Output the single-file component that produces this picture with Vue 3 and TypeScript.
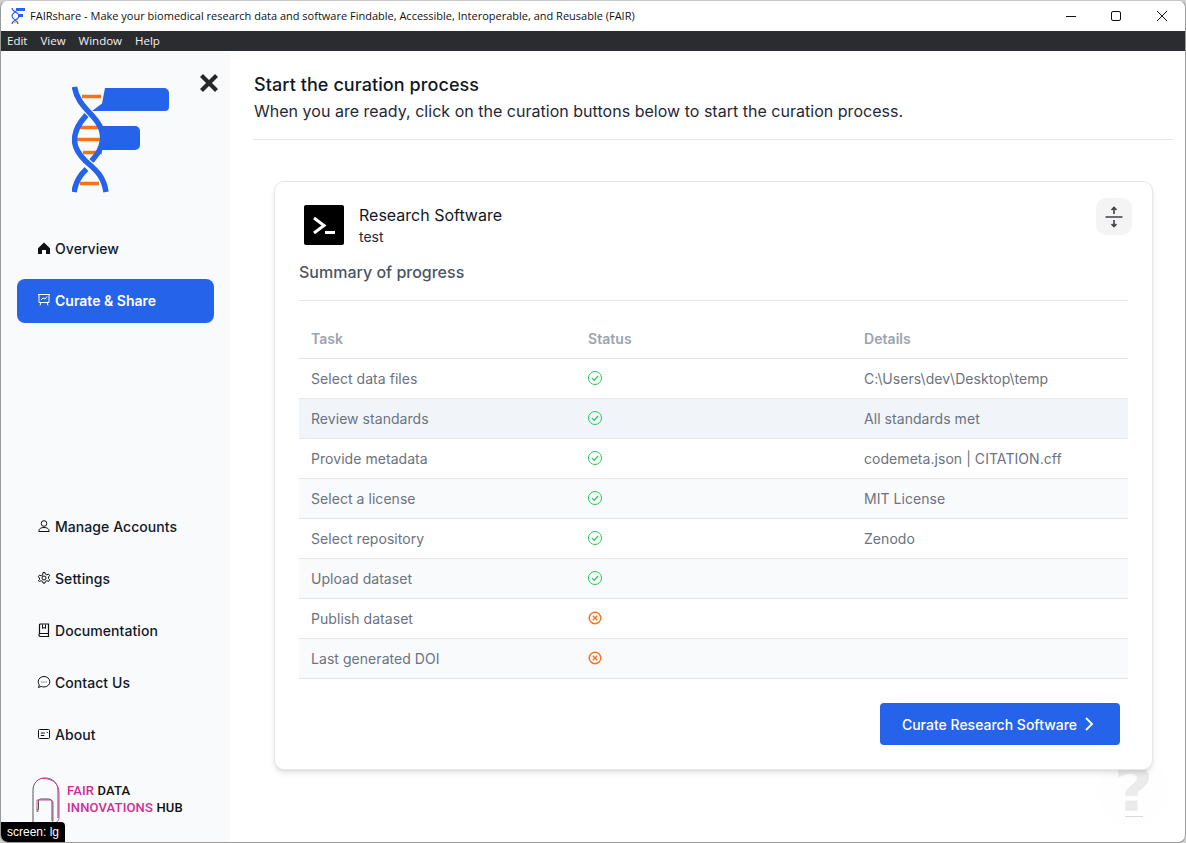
<script setup lang="ts">
type Task = { name: string; done: boolean; details: string; hover?: boolean };

const tasks: Task[] = [
  { name: "Select data files", done: true, details: "C:\\Users\\dev\\Desktop\\temp" },
  { name: "Review standards", done: true, details: "All standards met", hover: true },
  { name: "Provide metadata", done: true, details: "codemeta.json | CITATION.cff" },
  { name: "Select a license", done: true, details: "MIT License" },
  { name: "Select repository", done: true, details: "Zenodo" },
  { name: "Upload dataset", done: true, details: "" },
  { name: "Publish dataset", done: false, details: "" },
  { name: "Last generated DOI", done: false, details: "" },
];
</script>

<template>
  <div class="window">
    <header class="titlebar">
      <svg class="app-icon" width="14" height="18" viewBox="0 0 14 18">
        <path d="M1 1c0 4 7 4 7 8s-7 4-7 8M7 1c0 4-6 4-6 8s6 4 6 8" fill="none" stroke="#2563eb" stroke-width="1.2" />
        <path d="M5 1h9v3H5zM7 7h5v3H7z" fill="#2563eb" />
        <path d="M2 15h4" stroke="#f97316" stroke-width="1" />
      </svg>
      <span class="window-title">FAIRshare - Make your biomedical research data and software Findable, Accessible, Interoperable, and Reusable (FAIR)</span>
      <div class="window-controls">
        <svg width="12" height="12" viewBox="0 0 12 12"><path d="M1 6.5h10" stroke="#111" fill="none" /></svg>
        <svg width="12" height="12" viewBox="0 0 12 12"><rect x="1.5" y="1.5" width="9" height="9" rx="1.5" stroke="#111" fill="none" /></svg>
        <svg class="last" width="12" height="12" viewBox="0 0 12 12"><path d="M1 1l10 10M11 1L1 11" stroke="#111" fill="none" /></svg>
      </div>
    </header>
    <nav class="menubar">
      <span>Edit</span><span>View</span><span>Window</span><span>Help</span>
    </nav>

    <div class="body">
      <aside class="sidebar">
        <svg class="close" width="20" height="20" viewBox="0 0 20 20">
          <path d="M2.5 2.5l15 15M17.5 2.5l-15 15" stroke="#27272a" stroke-width="4.2" fill="none" />
        </svg>
        <div class="logo">
          <svg width="100" height="108" viewBox="0 0 100 108">
            <path d="M33 2h59a5 5 0 0 1 5 5v14a4 4 0 0 1-4 4H20l10-7.500z" fill="#2563eb" />
            <path d="M30 40h33a5 5 0 0 1 5 5v14a5 5 0 0 1-5 5H28z" fill="#2563eb" />
            <g stroke="#f97316" stroke-width="3.500" fill="none">
              <path d="M10 10.500h19M8 41.500h20M5 53.500h27M11 66.500h19M8 97.500h19" />
            </g>
            <g stroke="#2563eb" stroke-width="5.500" fill="none">
              <path d="M2.500 1C5 18 19 26 26 37c4 6 5 12 4.500 17-1 9-5 14-11 21" />
              <path d="M14.500 29C7 37 2.500 44 2.500 54c0 8 5 15 11 21 9 8 18 14 20.500 31" />
              <path d="M14.500 83C7 90 3.500 96 2 106" />
            </g>
          </svg>
        </div>
        <div class="nav-group">
          <a class="nav-item">
            <svg width="14" height="14" viewBox="0 0 14 14"><path d="M7 1.500L1 7.200V13h4V9h4v4h4V7.200z" fill="#111" /></svg>
            Overview
          </a>
          <a class="nav-item active">
            <svg width="14" height="14" viewBox="0 0 14 14" fill="none" stroke="currentColor"><path d="M1 1.500h12M2 1.500v8h10v-8M4 9.500l-1 3M10 9.500l1 3M4 7l2-2 2 1 2-2.500" stroke-width="1" /></svg>
            Curate &amp; Share
          </a>
        </div>
        <div class="nav-group bottom">
          <a class="nav-item">
            <svg width="14" height="14" viewBox="0 0 14 14" fill="none" stroke="#111"><circle cx="7" cy="4.500" r="2.800" /><path d="M1.800 12.500c0-3 2.200-4 5.200-4s5.200 1 5.200 4z" /></svg>
            Manage Accounts
          </a>
          <a class="nav-item">
            <svg width="14" height="14" viewBox="0 0 14 14" fill="none" stroke="#111"><circle cx="7" cy="7" r="2" /><path d="M6 1.500h2l.4 1.700 1.500.7 1.600-.8 1.200 1.700-1.200 1.200v1.600l1.200 1.200-1.200 1.700-1.600-.8-1.500.7-.4 1.700H6l-.4-1.700-1.500-.7-1.600.8L1.300 9.800l1.200-1.200V7L1.300 5.800l1.200-1.700 1.600.8 1.500-.7z" /></svg>
            Settings
          </a>
          <a class="nav-item">
            <svg width="14" height="14" viewBox="0 0 14 14" fill="none" stroke="#111"><path d="M2.500 11V2a1 1 0 0 1 1-1h8v9.500h-8a1.500 1.500 0 0 0 0 3h8V11" stroke-width="1.200" /><path d="M5.500 1.500v4l1.500-1 1.500 1v-4" stroke-width="1" /></svg>
            Documentation
          </a>
          <a class="nav-item">
            <svg width="14" height="14" viewBox="0 0 14 14" fill="none" stroke="#111"><path d="M7 1.500c3.200 0 5.800 2.300 5.800 5.200S10.200 12 7 12c-1 0-2-.2-2.800-.6L1.500 12.500l.8-2.500c-.7-.9-1.100-2-1.100-3.300C1.200 3.800 3.800 1.500 7 1.500z" /><path d="M4.500 7h.8M6.600 7h.8M8.700 7h.8" stroke-width="1.200" /></svg>
            Contact Us
          </a>
          <a class="nav-item">
            <svg width="14" height="14" viewBox="0 0 14 14" fill="none" stroke="#111"><rect x="1.500" y="2.500" width="11" height="9" rx="1" /><path d="M3.800 6h4M3.800 8.500h3.500M9.800 5.500h1" /></svg>
            About
          </a>
        </div>
        <div class="hub-logo">
          <svg width="28" height="48" viewBox="0 0 28 48" fill="none">
            <path d="M1 46V13C1 6 6 1 13 1s13 5 13 12v28" stroke="#55565a" />
            <path d="M8 1.500c9-1 19 3 19 14v25c0 3-2 6-7 6H8" stroke="#d0479b" />
            <path d="M5 33V23h13c2 0 3 1 3 3v17c0 2-1 3-3 3H6" stroke="#d0479b" />
            <path d="M6.500 33V24c0-1 1-2 2-2h8c2 0 3.500 1 3.500 3v19" stroke="#55565a" />
            <path d="M5.500 32v3" stroke="#888" stroke-width="2" />
          </svg>
          <div class="hub-text">
            <div><b>FAIR</b> DATA</div>
            <div><b>INNOVATIONS</b> HUB</div>
          </div>
        </div>
      </aside>

      <main class="main">
        <h1>Start the curation process</h1>
        <p class="lead">When you are ready, click on the curation buttons below to start the curation process.</p>
        <hr class="rule" />

        <section class="card">
          <div class="card-head">
            <div class="terminal">
              <svg width="40" height="40" viewBox="0 0 40 40" fill="none" stroke="#fff" stroke-width="3">
                <path d="M10 13l10 7.500L10 28" />
                <path d="M21 27.500h10" />
              </svg>
            </div>
            <div class="head-text">
              <div class="head-title">Research Software</div>
              <div class="head-sub">test</div>
            </div>
            <button class="expand" type="button" aria-label="Expand">
              <svg width="18" height="24" viewBox="0 0 18 24" fill="none" stroke="#3f3f46">
                <path d="M0.500 12h17" stroke-width="1.500" />
                <path d="M9 9V2.500M6.500 5L9 2.500 11.500 5M9 15v6.500M6.500 19L9 21.500 11.500 19" stroke-width="1.600" />
              </svg>
            </button>
          </div>
          <h2>Summary of progress</h2>
          <hr class="rule inner" />

          <table>
            <colgroup>
              <col class="col-task" />
              <col class="col-status" />
              <col />
            </colgroup>
            <thead>
              <tr><th>Task</th><th>Status</th><th>Details</th></tr>
            </thead>
            <tbody>
              <tr v-for="(t, i) in tasks" :key="t.name" :class="{ striped: i % 2 === 1, hovered: t.hover }">
                <td class="text">{{ t.name }}</td>
                <td>
                  <svg v-if="t.done" class="status" width="16" height="16" viewBox="0 0 16 16" fill="none" stroke="#22c55e">
                    <circle cx="8" cy="8" r="6.500" />
                    <path d="M5 8.200l2.200 2.200L11 6" stroke-width="1.200" />
                  </svg>
                  <svg v-else class="status" width="16" height="16" viewBox="0 0 16 16" fill="none" stroke="#f97316">
                    <circle cx="8" cy="8" r="5.800" stroke-width="1.400" />
                    <path d="M5.800 5.800l4.400 4.400M10.200 5.800l-4.400 4.400" stroke-width="1.400" />
                  </svg>
                </td>
                <td class="text">{{ t.details }}</td>
              </tr>
            </tbody>
          </table>

          <div class="actions">
            <button class="primary" type="button">
              Curate Research Software
              <svg width="12" height="14" viewBox="0 0 12 14" fill="none" stroke="#fff" stroke-width="1.800"><path d="M3 1L9 7l-6 6" /></svg>
            </button>
          </div>
        </section>
      </main>
    </div>

    <div class="help"><span>?</span><i></i></div>
    <div class="screen-badge">screen: lg</div>
  </div>
</template>

<style>
html,
body {
  margin: 0;
  background: #cfcfcf;
}
</style>

<style scoped>
.window {
  position: relative;
  width: 1186px;
  height: 843px;
  box-sizing: border-box;
  border: 1px solid #9a9a9a;
  border-top-color: #c8c8c8;
  border-radius: 8px;
  overflow: hidden;
  background: #fff;
  display: flex;
  flex-direction: column;
  font-family: Inter, "Liberation Sans", sans-serif;
  color: #111827;
}

.titlebar {
  height: 30px;
  flex: none;
  display: flex;
  align-items: center;
  background: #fff;
  padding-left: 10px;
}
.app-icon {
  margin-right: 5px;
}
.window-title {
  font-family: "Open Sans", sans-serif;
  font-size: 11px;
  color: #111;
  padding-bottom: 2px;
}
.window-controls {
  margin-left: auto;
  display: flex;
  gap: 33px;
  padding-right: 17px;
}
.window-controls .last {
  margin-left: 1px;
}

.menubar {
  height: 20px;
  box-sizing: border-box;
  flex: none;
  background: #2b2c30;
  color: #f2f2f2;
  font-family: "Open Sans", sans-serif;
  font-size: 11.5px;
  display: flex;
  align-items: center;
  gap: 13px;
  padding: 0 0 2px 6px;
}

.body {
  flex: 1;
  min-height: 0;
  display: flex;
}

.sidebar {
  position: relative;
  width: 229px;
  flex: none;
  background: #f8fafc;
  display: flex;
  flex-direction: column;
}
.close {
  position: absolute;
  left: 198px;
  top: 22px;
}
.logo {
  height: 176px;
  padding: 35px 0 0 71px;
  box-sizing: border-box;
}
.nav-group {
  display: flex;
  flex-direction: column;
  gap: 8px;
  padding-left: 16px;
}
.nav-group.bottom {
  margin-top: auto;
}
.nav-item {
  width: 197px;
  height: 44px;
  box-sizing: border-box;
  padding: 0 0 2px 20px;
  display: flex;
  align-items: center;
  gap: 4px;
  font-size: 14px;
  font-weight: 500;
  letter-spacing: 0.06px;
  border-radius: 8px;
  color: #111827;
}
.nav-item.active {
  background: #2563eb;
  color: #fff;
  font-weight: 600;
  letter-spacing: 0;
}
.hub-logo {
  display: flex;
  align-items: flex-start;
  gap: 7px;
  padding: 20px 0 17px 31px;
}
.hub-text {
  font-family: Roboto, sans-serif;
  font-size: 13px;
  line-height: 17px;
  font-weight: 500;
  letter-spacing: 0.15px;
  color: #111;
  padding-top: 5px;
}
.hub-text b {
  font-weight: 500;
  color: #d02c97;
}

.main {
  flex: 1;
  min-width: 0;
  padding: 20px 12px 0 24px;
}
h1 {
  margin: 0;
  font-size: 18px;
  line-height: 28px;
  font-weight: 500;
  letter-spacing: 0.08px;
  color: #111827;
}
.lead {
  margin: 0;
  font-size: 16px;
  line-height: 24px;
  letter-spacing: 0.02px;
  color: #1f2937;
}
.rule {
  margin: 16px 0 0;
  border: 0;
  border-top: 1px solid #e5e7eb;
}

.card {
  margin: 41px 20px 0 20px;
  padding: 16px 24px 24px;
  border: 1px solid #e5e7eb;
  border-radius: 10px;
  background: #fff;
  box-shadow: 0 4px 6px -1px rgba(0, 0, 0, 0.1), 0 2px 4px -2px rgba(0, 0, 0, 0.1);
  position: relative;
  z-index: 1;
}
.card-head {
  display: flex;
  align-items: flex-start;
}
.terminal {
  width: 40px;
  height: 40px;
  margin: 7px 0 0 5px;
  background: #000;
  border-radius: 2px;
  display: flex;
}
.head-text {
  margin: 6px 0 0 15px;
}
.head-title {
  font-size: 16px;
  line-height: 22px;
  color: #111827;
}
.head-sub {
  font-size: 14px;
  line-height: 22px;
  color: #1f2937;
}
.expand {
  margin: 0 -4px 0 auto;
  width: 36px;
  height: 37px;
  padding: 0;
  border: 0;
  border-radius: 10px;
  background: #f4f4f5;
  display: flex;
  align-items: center;
  justify-content: center;
}
h2 {
  margin: 12px 0 0;
  font-size: 16px;
  line-height: 24px;
  font-weight: 500;
  color: #4b5563;
}
.rule.inner {
  margin-top: 16px;
}

table {
  width: 100%;
  margin-top: 18px;
  border-collapse: collapse;
  table-layout: fixed;
  font-size: 14px;
  letter-spacing: 0.05px;
  color: #6b7280;
}
.col-task {
  width: 277px;
}
.col-status {
  width: 276px;
}
th {
  height: 38px;
  padding: 0 12px 1px;
  text-align: left;
  font-weight: 600;
  color: #9ca3af;
  border-bottom: 1px solid #e5e7eb;
}
td {
  height: 39px;
  padding: 0 12px;
  border-bottom: 1px solid #e5e7eb;
}
td.text {
  height: 38px;
  padding-bottom: 1px;
}
tr.striped {
  background: #f9fafb;
}
tr.hovered {
  background: #f1f5f9;
}
.status {
  display: block;
  margin: -1px 0 0 -1px;
}

.actions {
  display: flex;
  justify-content: flex-end;
  padding: 24px 8px 0 0;
}
.primary {
  width: 240px;
  height: 42px;
  padding: 0 3px 0 0;
  border: 0;
  border-radius: 4px;
  background: #2563eb;
  color: #fff;
  font-family: inherit;
  font-size: 14px;
  font-weight: 500;
  display: flex;
  align-items: center;
  justify-content: center;
  gap: 6px;
}

.help {
  position: absolute;
  left: 1096px;
  top: 753px;
  width: 72px;
  height: 72px;
  border-radius: 50%;
  background: #fefefe;
  text-align: center;
  color: #ebebeb;
  font-family: "DejaVu Sans", sans-serif;
  font-size: 60px;
  line-height: 72px;
  font-weight: 700;
  overflow: hidden;
}
.help span {
  display: inline-block;
  transform: scaleX(1.15);
}
.help i {
  position: absolute;
  left: 28px;
  top: 62px;
  width: 18px;
  height: 1px;
  background: #d9d9d9;
}
.screen-badge {
  position: absolute;
  left: 0;
  bottom: 0;
  width: 64px;
  height: 20px;
  background: #000;
  color: #fff;
  border-top-right-radius: 4px;
  font-family: "Liberation Sans", sans-serif;
  font-size: 12px;
  line-height: 20px;
  text-align: center;
}
</style>
